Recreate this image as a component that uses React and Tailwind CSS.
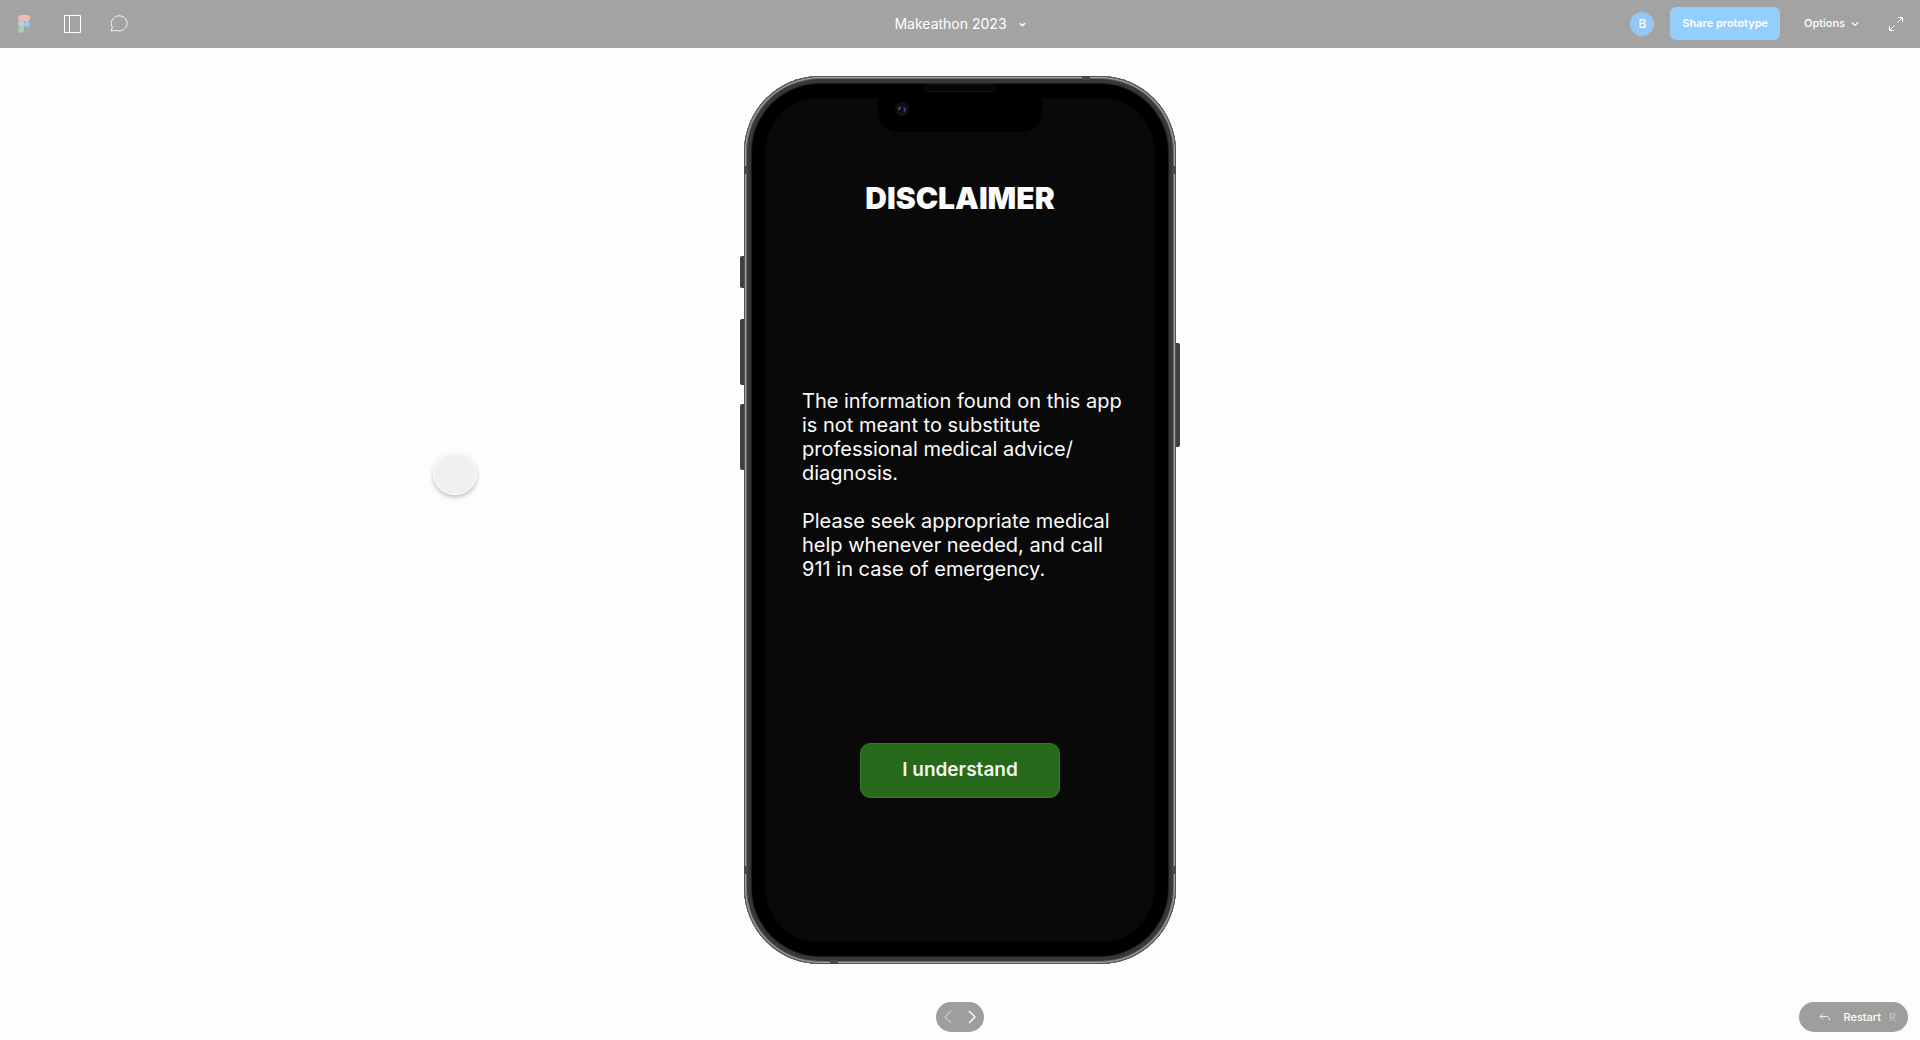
const FigmaLogo = () => (
  <svg width="12" height="18" viewBox="0 0 12 18" aria-hidden="true">
    <path d="M3 0H6V6H3A3 3 0 0 1 3 0Z" fill="#e8bdb0" />
    <path d="M6 0H9A3 3 0 0 1 9 6H6Z" fill="#eec0b4" />
    <path d="M3 6H6V12H3A3 3 0 0 1 3 6Z" fill="#c5c8d2" />
    <circle cx="9" cy="9" r="3" fill="#92cdfa" />
    <path d="M3 12H6V15A3 3 0 1 1 3 12Z" fill="#a6cfa8" />
    <path d="M5 12H6V16H5Z" fill="#92cdfa" />
  </svg>
);

const SidebarIcon = () => (
  <svg width="18" height="18" viewBox="0 0 18 18" fill="none" stroke="#fff" aria-hidden="true">
    <path d="M.5.5H16.5V17.5H.5ZM5.5.5V17.5" />
  </svg>
);

const CommentIcon = () => (
  <svg width="18" height="18" viewBox="0 0 18 18" fill="none" stroke="#f5f5f5" strokeLinejoin="round" aria-hidden="true">
    <path d="M1 16L2.4 12.2A7.9 7.6 0 1 1 6.2 15.4Z" />
  </svg>
);

const Chevron = ({ size, stroke }) => (
  <svg width={size} height={size} viewBox="0 0 8 8" fill="none" stroke="#fff" strokeWidth={stroke} aria-hidden="true">
    <path d="M1 2.5L4 5.5L7 2.5" />
  </svg>
);

const ExpandIcon = () => (
  <svg width="14" height="14" viewBox="0 0 14 14" fill="none" stroke="#fff" aria-hidden="true">
    <path d="M9 .5H13.5V5M13.5.5L8.5 5.5M5 13.5H.5V9M.5 13.5L5.5 8.5" />
  </svg>
);

const ArrowHead = ({ d }) => (
  <svg width="8" height="14" viewBox="0 0 8 14" fill="none" stroke="currentColor" strokeWidth="1.4" aria-hidden="true">
    <path d={d} />
  </svg>
);

const UndoIcon = () => (
  <svg width="12" height="8" viewBox="0 0 12 8" fill="none" stroke="#f0f0f0" aria-hidden="true">
    <path d="M4 .5L1 3.5L4 6.5M1 3.5H7.5C9.5 3.5 10.5 5 10.5 7.5" />
  </svg>
);

function TopBar() {
  return (
    <header className="grid h-12 shrink-0 grid-cols-[1fr_auto_1fr] items-center bg-[#a3a3a3] text-white">
      <div className="flex items-center gap-7 pl-[18px]">
        <button aria-label="Figma" className="mr-1.5 h-[18px]"><FigmaLogo /></button>
        <button aria-label="Toggle sidebar" className="h-[18px]"><SidebarIcon /></button>
        <button aria-label="Comments" className="h-[18px]"><CommentIcon /></button>
      </div>
      <button className="flex items-center gap-3 text-sm leading-5">
        Makeathon 2023
        <Chevron size={7} stroke="1.700" />
      </button>
      <div className="flex items-center justify-end pr-[17px] pb-px text-xs font-medium">
        <span className="flex size-6 items-center justify-center rounded-full bg-[#94c8f4]">B</span>
        <button className="ml-4 h-[33px] rounded-md bg-[#93cefd] px-3 text-[11px] font-semibold">Share prototype</button>
        <button className="ml-6 flex items-center gap-1.5 text-[11px]">
          Options
          <Chevron size={8} stroke="1.200" />
        </button>
        <button aria-label="Full screen" className="ml-[30px]"><ExpandIcon /></button>
      </div>
    </header>
  );
}

function Phone() {
  return (
    <section className="relative mt-7 w-[432px] shrink-0" aria-label="Phone preview">
      <i className="absolute top-[180px] -left-1 h-8 w-1.5 rounded-l-xs bg-[#3f3f3f]" />
      <i className="absolute top-[243px] -left-1 h-[66px] w-1.5 rounded-l-xs bg-[#3f3f3f]" />
      <i className="absolute top-[328px] -left-1 h-[66px] w-1.5 rounded-l-xs bg-[#3f3f3f]" />
      <i className="absolute top-[267px] -right-1 h-[104px] w-1.5 rounded-r-xs bg-[#3f3f3f]" />
      <div className="relative overflow-hidden rounded-[76px] bg-black p-[22px] shadow-[inset_0_0_0_1px_#555453,inset_0_0_0_2px_#a09f9e,inset_0_0_0_3px_#706f6e,inset_0_0_0_7px_#3a3837,inset_0_0_0_8px_#1c1b1b]">
        <i className="absolute top-[90px] left-0 h-2 w-1 bg-[#4a4949]" />
        <i className="absolute top-[90px] right-0 h-2 w-1 bg-[#4a4949]" />
        <i className="absolute bottom-[90px] left-0 h-2 w-1 bg-[#4a4949]" />
        <i className="absolute right-0 bottom-[90px] h-2 w-1 bg-[#4a4949]" />
        <i className="absolute top-0 left-[338px] h-1 w-2 bg-[#4a4949]" />
        <i className="absolute bottom-0 left-[86px] h-1 w-2 bg-[#4a4949]" />
        <i className="absolute top-2 left-[180px] h-2 w-[72px] rounded-full border border-[#151515] bg-[#060606]" />
        <div className="flex flex-col items-center rounded-[52px] bg-[#090909] pb-36 text-[#fbfbfb]">
          <div className="h-[34px] w-[164px] rounded-b-[20px] bg-black pt-1 pl-4">
            <svg width="16" height="16" viewBox="0 0 16 16" aria-hidden="true">
              <circle cx="8" cy="7" r="7" fill="#101012" />
              <circle cx="8" cy="7" r="4.5" fill="#0c0e1e" />
              <path d="M4 7Q4.500 4 7 4.500L6.500 6L5.500 8.500Z" fill="#5c5c6c" />
              <path d="M9 5L11 5.500L12.500 8L10.500 10L9 9L10 7Z" fill="#34457f" />
            </svg>
          </div>
          <h1 className="mt-12 text-[30px] leading-9 font-black">DISCLAIMER</h1>
          <div className="mt-[173px] ml-9 w-[330px] space-y-6 self-start text-xl leading-6">
            <p>The information found on this app is not meant to substitute professional medical advice/<wbr />diagnosis.</p>
            <p>Please seek appropriate medical help whenever needed, and call 911 in case of emergency.</p>
          </div>
          <button className="mt-[162px] h-[55px] w-[200px] rounded-[10px] border border-[#37742d] bg-[#27691a] text-[19px] font-semibold text-[#f0f5ee]">
            I understand
          </button>
        </div>
      </div>
    </section>
  );
}

function BottomBar() {
  return (
    <footer className="mt-auto grid w-full grid-cols-[1fr_auto_1fr] items-center px-3 pb-2">
      <nav className="col-start-2 flex h-[30px] w-12 items-center justify-between rounded-full bg-[#9e9e9c] px-2" aria-label="Frames">
        <button aria-label="Previous frame" disabled className="text-[#c4c4c2]"><ArrowHead d="M7 1L1 7L7 13" /></button>
        <button aria-label="Next frame" className="text-white"><ArrowHead d="M1 1L7 7L1 13" /></button>
      </nav>
      <button className="flex h-[30px] items-center justify-self-end rounded-full bg-[#9e9e9c] pr-3 pl-5 text-[11px] font-medium text-white">
        <UndoIcon />
        <span className="ml-3">Restart</span>
        <kbd className="ml-2 font-sans text-[#c4c4c2]">R</kbd>
      </button>
    </footer>
  );
}

export default function App() {
  return (
    <div className="flex min-h-screen flex-col bg-[#fdfdfd] font-['Inter',sans-serif]">
      <TopBar />
      <main className="relative flex grow flex-col items-center">
        <i className="absolute top-[405px] left-[433px] h-[42px] w-11 rounded-full border border-white bg-[#f0f0f0] shadow-[0_2px_4px_#00000040]" />
        <Phone />
        <BottomBar />
      </main>
    </div>
  );
}
